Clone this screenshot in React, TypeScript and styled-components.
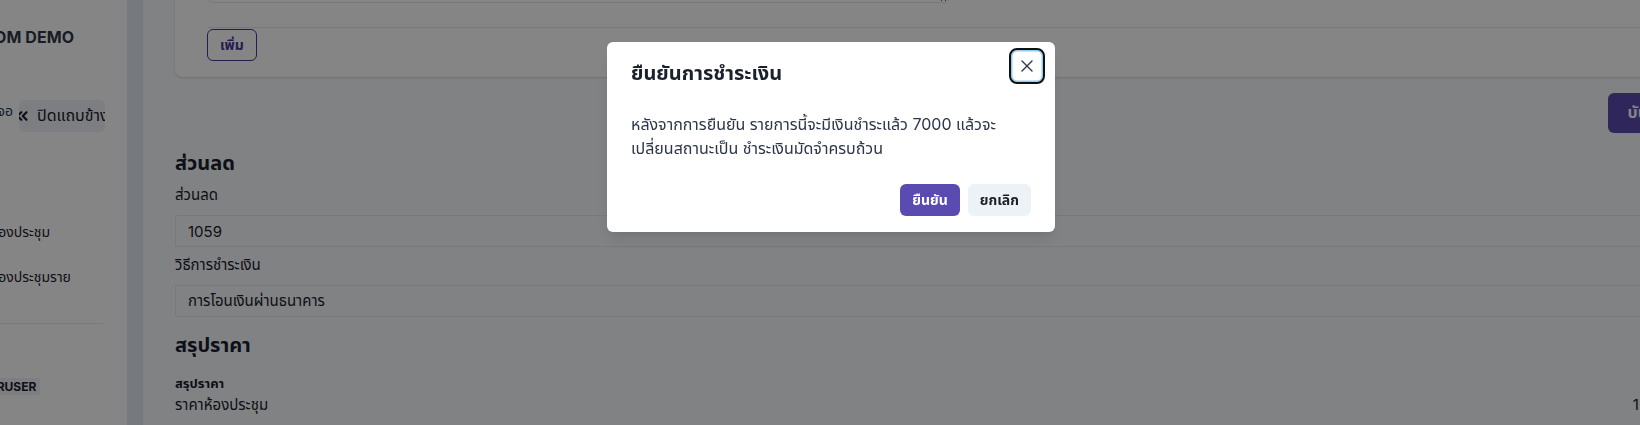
import React from 'react'
import styled, { createGlobalStyle } from 'styled-components'
import { ChevronsLeft } from 'lucide-react'

const PRIMARY = '#5a4bb1'
const FONT = `'Inter', 'Noto Sans Thai', 'Noto Sans', 'DejaVu Sans', sans-serif`

const GlobalStyle = createGlobalStyle`
  * {
    box-sizing: border-box;
  }

  html, body {
    margin: 0;
    padding: 0;
    overflow: hidden;
  }

  body {
    font-family: ${FONT};
    color: #1a202c;
    background: #f7fafc;
  }
`

const App: React.FC = (): JSX.Element => {
  return (
    <>
      <GlobalStyle />
      <Layout>
        <Sidebar>
          <SidebarInner>
            <BrandTitle>ROOM DEMO</BrandTitle>

            <ToggleRow>
              <ToggleHint>ขยายจอ</ToggleHint>
              <CollapseButton>
                <ChevronsLeft size={18} strokeWidth={3} />
                <span>ปิดแถบข้าง</span>
              </CollapseButton>
            </ToggleRow>

            <MenuList>
              <MenuItem>ห้องประชุม</MenuItem>
              <MenuItem>ห้องประชุมราย</MenuItem>
            </MenuList>

            <SidebarDivider />

            <RoleBadge>SUPERUSER</RoleBadge>
          </SidebarInner>
        </Sidebar>

        <Gutter />

        <Main>
          <Content>
            <Card>
              <FieldRow>
                <NoteArea defaultValue="" />
              </FieldRow>
              <OutlineButton>เพิ่ม</OutlineButton>
            </Card>

            <ActionRow>
              <SaveButton>บันทึก</SaveButton>
            </ActionRow>

            <SectionTitle $gap={15}>ส่วนลด</SectionTitle>
            <FieldLabel $gap={5}>ส่วนลด</FieldLabel>
            <TextInput defaultValue="1059" />

            <FieldLabel $gap={6}>วิธีการชำระเงิน</FieldLabel>
            <TextInput defaultValue="การโอนเงินผ่านธนาคาร" />

            <SectionTitle $gap={13}>สรุปราคา</SectionTitle>
            <SummaryLabel>สรุปราคา</SummaryLabel>
            <PriceRow>
              <span>ราคาห้องประชุม</span>
              <span>15,000</span>
            </PriceRow>
          </Content>
        </Main>
      </Layout>

      <Overlay>
        <Dialog role="dialog" aria-modal="true">
          <DialogHeader>
            <DialogTitle>ยืนยันการชำระเงิน</DialogTitle>
            <CloseButton aria-label="Close">
              <svg width="12" height="12" viewBox="0 0 12 12">
                <path
                  d="M1 1 L11 11 M11 1 L1 11"
                  stroke="#2d3748"
                  strokeWidth="1.4"
                  strokeLinecap="round"
                />
              </svg>
            </CloseButton>
          </DialogHeader>

          <DialogBody>
            หลังจากการยืนยัน รายการนี้จะมีเงินชำระแล้ว 7000 แล้วจะเปลี่ยนสถานะเป็น
            ชำระเงินมัดจำครบถ้วน
          </DialogBody>

          <DialogFooter>
            <SolidButton>ยืนยัน</SolidButton>
            <GhostButton>ยกเลิก</GhostButton>
          </DialogFooter>
        </Dialog>
      </Overlay>
    </>
  )
}

export default App

const Layout = styled.div`
  display: flex;
  width: 1640px;
  height: 425px;
  overflow: hidden;
`

const Sidebar = styled.aside`
  width: 127px;
  flex-shrink: 0;
  background: #ffffff;
  overflow: hidden;
`

const SidebarInner = styled.div`
  display: flex;
  flex-direction: column;
  width: 160px;
  margin-left: -33px;
  padding-top: 25px;
`

const BrandTitle = styled.div`
  padding-left: 4px;
  font-size: 16px;
  line-height: 24px;
  font-weight: 700;
  letter-spacing: 0.1px;
  color: #2d3748;
  white-space: nowrap;
`

const ToggleRow = styled.div`
  display: flex;
  align-items: center;
  margin-top: 51px;
  height: 32px;
`

const ToggleHint = styled.span`
  font-size: 14px;
  line-height: 20px;
  color: #2d3748;
  white-space: nowrap;
  margin-top: -10px;
  width: 46px;
  text-align: right;
`

const CollapseButton = styled.button`
  display: flex;
  align-items: center;
  gap: 6px;
  width: 86px;
  height: 32px;
  margin-left: 6px;
  padding: 0 0 0 4px;
  border: none;
  border-radius: 6px;
  background: #edf2f7;
  color: #1a202c;
  font-family: ${FONT};
  font-size: 16px;
  white-space: nowrap;
  overflow: hidden;

  svg {
    flex-shrink: 0;
    margin-left: -10px;
  }
`

const MenuList = styled.div`
  display: flex;
  flex-direction: column;
  gap: 21px;
  margin-top: 88px;
`

const MenuItem = styled.div`
  padding-left: 23px;
  font-size: 14px;
  line-height: 24px;
  color: #1a202c;
  white-space: nowrap;
`

const SidebarDivider = styled.hr`
  width: 136px;
  margin: 34px 0 0;
  border: none;
  border-top: 1px solid #e2e8f0;
`

const RoleBadge = styled.span`
  align-self: flex-start;
  margin-top: 54px;
  margin-left: -6px;
  padding: 0 4px;
  height: 17px;
  line-height: 17px;
  border-radius: 2px;
  background: #edf2f7;
  color: #1a202c;
  font-size: 12px;
  font-weight: 700;
`

const Gutter = styled.div`
  width: 16px;
  flex-shrink: 0;
  background: #e2e8f0;
`

const Main = styled.main`
  flex: 1;
  min-width: 0;
  overflow: hidden;
  padding-left: 32px;
`

const Content = styled.div`
  width: 1513px;
  margin-top: -60px;
  display: flex;
  flex-direction: column;
`

const Card = styled.section`
  display: flex;
  flex-direction: column;
  align-items: flex-start;
  padding: 0 32px 16px;
  background: #ffffff;
  border-radius: 8px;
  box-shadow: 0 1px 3px rgba(0, 0, 0, 0.1), 0 1px 2px rgba(0, 0, 0, 0.06);
`

const FieldRow = styled.div`
  align-self: stretch;
  padding-bottom: 24px;
  border-bottom: 1px solid #e2e8f0;
`

const NoteArea = styled.textarea`
  display: block;
  width: 743px;
  height: 63px;
  border: 1px solid #e2e8f0;
  border-radius: 6px;
  resize: vertical;
  font-family: ${FONT};
`

const OutlineButton = styled.button`
  margin-top: 1px;
  height: 32px;
  padding: 0 12px;
  border: 1px solid #463a99;
  border-radius: 6px;
  background: transparent;
  color: #463a99;
  font-family: ${FONT};
  font-size: 14px;
  font-weight: 700;
`

const ActionRow = styled.div`
  display: flex;
  justify-content: flex-end;
  margin-top: 16px;
`

const SaveButton = styled.button`
  width: 80px;
  height: 40px;
  padding: 0 16px;
  border: none;
  border-radius: 6px;
  background: ${PRIMARY};
  color: #ffffff;
  font-family: ${FONT};
  font-size: 16px;
  font-weight: 700;
`

const SectionTitle = styled.h2<{ $gap: number }>`
  margin: ${(p) => p.$gap}px 0 0;
  font-size: 20px;
  line-height: 30px;
  font-weight: 700;
  color: #1a202c;
`

const FieldLabel = styled.label<{ $gap: number }>`
  display: block;
  margin-top: ${(p) => p.$gap}px;
  margin-bottom: 8px;
  font-size: 15px;
  line-height: 24px;
  color: #1a202c;
`

const TextInput = styled.input`
  display: block;
  width: 100%;
  height: 32px;
  padding: 0 12px;
  border: 1px solid #e2e8f0;
  border-radius: 2px;
  background: transparent;
  color: #1a202c;
  font-family: ${FONT};
  font-size: 15px;
  outline: none;
`

const SummaryLabel = styled.div`
  margin-top: 13px;
  font-size: 13px;
  line-height: 20px;
  font-weight: 700;
`

const PriceRow = styled.div`
  display: flex;
  justify-content: space-between;
  padding-right: 8px;
  font-size: 15px;
  line-height: 24px;
`

const Overlay = styled.div`
  position: fixed;
  inset: 0;
  display: flex;
  justify-content: center;
  align-items: flex-start;
  padding: 42px 0 0 22px;
  background: rgba(0, 0, 0, 0.48);
`

const Dialog = styled.div`
  width: 448px;
  display: flex;
  flex-direction: column;
  background: #ffffff;
  border-radius: 6px;
  box-shadow: 0 10px 15px -3px rgba(0, 0, 0, 0.1), 0 4px 6px -2px rgba(0, 0, 0, 0.05);
  color: #1a202c;
`

const DialogHeader = styled.header`
  position: relative;
  padding: 16px 24px;
`

const DialogTitle = styled.h2`
  margin: 0;
  font-size: 20px;
  line-height: 30px;
  font-weight: 700;
  color: #1a202c;
`

const CloseButton = styled.button`
  position: absolute;
  top: 8px;
  right: 12px;
  width: 32px;
  height: 32px;
  display: flex;
  align-items: center;
  justify-content: center;
  padding: 0;
  border: none;
  border-radius: 6px;
  background: transparent;
  outline: 2px solid #111111;
  box-shadow: inset 0 0 0 1.5px #90cdf4;
`

const DialogBody = styled.div`
  padding: 8px 24px;
  font-size: 16px;
  line-height: 24px;
  color: #2d3748;
`

const DialogFooter = styled.footer`
  display: flex;
  justify-content: flex-end;
  gap: 8px;
  padding: 16px 24px;
`

const BaseButton = styled.button`
  height: 32px;
  padding: 0 12px;
  border: none;
  border-radius: 6px;
  font-family: ${FONT};
  font-size: 14px;
  font-weight: 700;
`

const SolidButton = styled(BaseButton)`
  background: ${PRIMARY};
  color: #ffffff;
`

const GhostButton = styled(BaseButton)`
  background: #edf2f7;
  color: #1a202c;
`
